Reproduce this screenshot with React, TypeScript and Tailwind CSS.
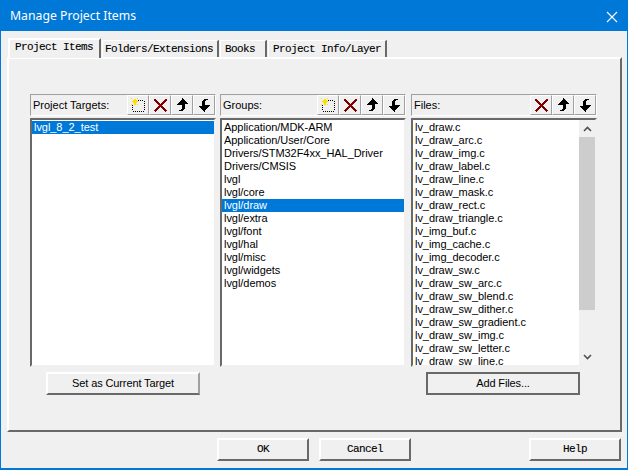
const groups = [
  "Application/MDK-ARM",
  "Application/User/Core",
  "Drivers/STM32F4xx_HAL_Driver",
  "Drivers/CMSIS",
  "lvgl",
  "lvgl/core",
  "lvgl/draw",
  "lvgl/extra",
  "lvgl/font",
  "lvgl/hal",
  "lvgl/misc",
  "lvgl/widgets",
  "lvgl/demos",
];

const files = [
  "lv_draw.c",
  "lv_draw_arc.c",
  "lv_draw_img.c",
  "lv_draw_label.c",
  "lv_draw_line.c",
  "lv_draw_mask.c",
  "lv_draw_rect.c",
  "lv_draw_triangle.c",
  "lv_img_buf.c",
  "lv_img_cache.c",
  "lv_img_decoder.c",
  "lv_draw_sw.c",
  "lv_draw_sw_arc.c",
  "lv_draw_sw_blend.c",
  "lv_draw_sw_dither.c",
  "lv_draw_sw_gradient.c",
  "lv_draw_sw_img.c",
  "lv_draw_sw_letter.c",
  "lv_draw_sw_line.c",
];

function NewIcon() {
  return (
    <svg width="16" height="16" viewBox="0 0 16 16" shapeRendering="crispEdges">
      <path d="M6 3h1v1H6zM8 3h1v1H8zM10 3h1v1h-1zM12 3h1v1h-1zM14 4h1v1h-1zM14 6h1v1h-1zM14 8h1v1h-1zM14 10h1v1h-1zM14 12h1v1h-1zM3 14h1v1H3zM5 14h1v1H5zM7 14h1v1H7zM9 14h1v1H9zM11 14h1v1h-1zM13 14h1v1h-1zM2 8h1v1H2zM2 10h1v1H2zM2 12h1v1H2z" fill="#000" />
      <path d="M2 4h6v1H2zM4 2h2v6H4zM3 3h4v3H3zM1 1h1v1H1zM7 1h1v1H7zM1 7h1v1H1zM7 7h1v1H7z" fill="#ffe000" />
    </svg>
  );
}

function DelIcon() {
  return (
    <svg width="15" height="15" viewBox="0 0 15 15" shapeRendering="crispEdges">
      <path d="M1.5 1.5l12 12M13.5 1.5l-12 12" fill="none" stroke="#800000" strokeWidth="2.4" />
    </svg>
  );
}

// stepped arrow with the tail bending away at the end, the down one is the same shape turned round
function ArrowIcon({ down }: { down?: boolean }) {
  return (
    <svg width="13" height="14" viewBox="0 0 13 14" shapeRendering="crispEdges" className={down ? "rotate-180" : ""}>
      <path
        d="M6 0h1v1h1v1h1v1h1v1h1v1h1v1H9v5H8v1H7v1H3v-1h2v-1h1V7H1V6h1V5h1V4h1V3h1V2h1z"
        fill="#000"
      />
    </svg>
  );
}

function Tool({ children }: { children: React.ReactNode }) {
  return (
    <div className="w-[22px] h-[20px] flex items-center justify-center border border-t-white border-l-white border-r-[#a0a0a0] border-b-[#a0a0a0]">
      {children}
    </div>
  );
}

function Panel({
  title,
  showNew,
  items,
  selected,
  scroll,
}: {
  title: string;
  showNew?: boolean;
  items: string[];
  selected: number;
  scroll?: boolean;
}) {
  return (
    <div className="flex flex-col w-[186px]">
      <div className="h-[22px] flex items-center pl-[2px] border border-t-[#a0a0a0] border-l-[#a0a0a0] border-r-white border-b-white">
        <span className="flex-1 text-[11px] pt-[1px]">{title}</span>
        {showNew && (
          <Tool>
            <NewIcon />
          </Tool>
        )}
        <Tool>
          <DelIcon />
        </Tool>
        <Tool>
          <ArrowIcon />
        </Tool>
        <Tool>
          <ArrowIcon down />
        </Tool>
      </div>
      <div className="mt-[2px] h-[249px] flex bg-white border-2 border-t-[#696969] border-l-[#696969] border-r-[#f0f0f0] border-b-[#f0f0f0] overflow-hidden">
        <div className="flex-1 flex flex-col pt-[1px] overflow-hidden">
          {items.map((item, i) => (
            <div
              key={item}
              className={
                i === selected
                  ? "h-[13px] shrink-0 leading-[13px] pl-[2px] text-[11px] tracking-[-0.05px] bg-[#0078d7] text-white"
                  : "h-[13px] shrink-0 leading-[13px] pl-[2px] text-[11px] tracking-[-0.05px] text-black"
              }
            >
              {item}
            </div>
          ))}
        </div>
        {scroll && (
          <div className="w-[16px] shrink-0 flex flex-col bg-[#f0f0f0]">
            <div className="h-[17px] flex items-center justify-center">
              <svg width="9" height="6" viewBox="0 0 9 6">
                <path d="M1 5l3.5-3.5L8 5" fill="none" stroke="#505050" strokeWidth="1.6" />
              </svg>
            </div>
            <div className="h-[173px] bg-[#cdcdcd]" />
            <div className="flex-1" />
            <div className="h-[17px] flex items-center justify-center">
              <svg width="9" height="6" viewBox="0 0 9 6">
                <path d="M1 1l3.5 3.5L8 1" fill="none" stroke="#505050" strokeWidth="1.6" />
              </svg>
            </div>
          </div>
        )}
      </div>
    </div>
  );
}

function Tab({ label, active, className }: { label: string; active?: boolean; className: string }) {
  return (
    <div
      className={
        active
          ? `${className} h-[20px] flex items-center bg-[#f0f0f0] border-t-2 border-l-2 border-white border-r-2 border-r-[#696969] rounded-tl-[2px] relative top-[1px] pb-[3px]`
          : `${className} h-[17px] flex items-center bg-[#f0f0f0] border-t border-l border-white border-r-2 border-r-[#696969] rounded-tl-[2px]`
      }
    >
      <span className="font-['Liberation_Mono',monospace] text-[11px] tracking-[-0.6px] whitespace-pre [-webkit-text-stroke:0.12px_#000]">{label}</span>
    </div>
  );
}

function DlgButton({ label, className }: { label: string; className: string }) {
  return (
    <div
      className={`h-[23px] w-[92px] flex items-center justify-center border-2 border-t-white border-l-white border-r-[#696969] border-b-[#696969] font-['Liberation_Mono',monospace] text-[11px] tracking-[-0.6px] [-webkit-text-stroke:0.12px_#000] ${className}`}
    >
      {label}
    </div>
  );
}

export default function App() {
  return (
    <div className="w-[628px] h-[470px] flex flex-col bg-[#f0f0f0] border border-b-2 border-[#0078d7] font-['Liberation_Sans',Arial,sans-serif] text-black overflow-hidden">
      <div className="h-[30px] shrink-0 flex items-center justify-between bg-[#0078d7] pl-[9px] pr-[9px] pt-[1px]">
        <span className="font-['Noto_Sans',sans-serif] text-[12.25px] text-white">Manage Project Items</span>
        <svg width="12" height="12" viewBox="0 0 12 12">
          <path d="M1 1l10 10M11 1L1 11" fill="none" stroke="#fff" strokeWidth="1.1" />
        </svg>
      </div>

      <div className="mt-[7px] ml-[7px] h-[19px] flex items-end gap-[1px]">
        <Tab label="Project Items" active className="w-[93px] pl-[5px]" />
        <Tab label="Folders/Extensions" className="w-[117px] pl-[2px]" />
        <Tab label="Books" className="w-[47px] pl-[4px]" />
        <Tab label="Project Info/Layer" className="w-[119px] pl-[4px]" />
      </div>

      <div className="ml-[6px] w-[615px] h-[375px] border-2 border-t-white border-l-white border-r-[#696969] border-b-[#696969] pt-[35px] pl-[21px]">
        <div className="flex gap-[4px]">
          <Panel title="Project Targets:" showNew items={["lvgl_8_2_test"]} selected={0} />
          <Panel title="Groups:" showNew items={groups} selected={6} />
          <div className="ml-[1px]">
            <Panel title="Files:" items={files} selected={-1} scroll />
          </div>
        </div>
        <div className="mt-[5px] flex text-[11px] tracking-[-0.12px]">
          <div className="ml-[16px] w-[154px] h-[23px] flex items-center justify-center border-2 border-t-white border-l-white border-r-[#a0a0a0] border-b-[#696969]">
            Set as Current Target
          </div>
          <div className="ml-[226px] w-[154px] h-[23px] flex items-center justify-center border-2 border-[#696969]">
            Add Files...
          </div>
        </div>
      </div>

      <div className="mt-[6px] flex">
        <DlgButton label="OK" className="ml-[216px]" />
        <DlgButton label="Cancel" className="ml-[10px]" />
        <DlgButton label="Help" className="ml-[118px]" />
      </div>
    </div>
  );
}
